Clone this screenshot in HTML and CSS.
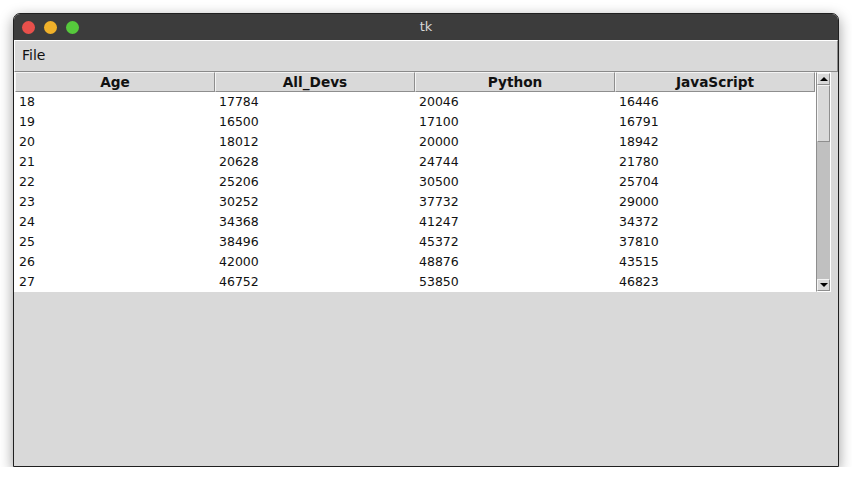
FILE: index.html
```html
<!DOCTYPE html>
<html>
<head>
<meta charset="utf-8">
<link rel="stylesheet" href="styles.css">
</head>
<body>
<div class="window">
  <div class="titlebar">
    <div class="lights">
      <span class="light red"></span>
      <span class="light yellow"></span>
      <span class="light green"></span>
    </div>
    <div class="title">tk</div>
  </div>
  <div class="menubar"><span class="menu-item">File</span></div>
  <div class="content">
    <div class="tree-area">
      <div class="table">
        <div class="row head">
          <div class="hcell">Age</div>
          <div class="hcell">All_Devs</div>
          <div class="hcell">Python</div>
          <div class="hcell">JavaScript</div>
        </div>
        <div class="row"><div class="cell">18</div><div class="cell">17784</div><div class="cell">20046</div><div class="cell">16446</div></div>
        <div class="row"><div class="cell">19</div><div class="cell">16500</div><div class="cell">17100</div><div class="cell">16791</div></div>
        <div class="row"><div class="cell">20</div><div class="cell">18012</div><div class="cell">20000</div><div class="cell">18942</div></div>
        <div class="row"><div class="cell">21</div><div class="cell">20628</div><div class="cell">24744</div><div class="cell">21780</div></div>
        <div class="row"><div class="cell">22</div><div class="cell">25206</div><div class="cell">30500</div><div class="cell">25704</div></div>
        <div class="row"><div class="cell">23</div><div class="cell">30252</div><div class="cell">37732</div><div class="cell">29000</div></div>
        <div class="row"><div class="cell">24</div><div class="cell">34368</div><div class="cell">41247</div><div class="cell">34372</div></div>
        <div class="row"><div class="cell">25</div><div class="cell">38496</div><div class="cell">45372</div><div class="cell">37810</div></div>
        <div class="row"><div class="cell">26</div><div class="cell">42000</div><div class="cell">48876</div><div class="cell">43515</div></div>
        <div class="row"><div class="cell">27</div><div class="cell">46752</div><div class="cell">53850</div><div class="cell">46823</div></div>
      </div>
      <div class="scrollbar">
        <div class="sbtn up"><span class="arrow-up"></span></div>
        <div class="trough">
          <div class="thumb"></div>
        </div>
        <div class="sbtn down"><span class="arrow-down"></span></div>
      </div>
    </div>
  </div>
</div>
</body>
</html>
```
FILE: styles.css
```css
html, body {
  margin: 0;
  padding: 0;
  background: #ffffff;
}
body {
  padding: 13px 0 0 13px;
  font-family: "DejaVu Sans", sans-serif;
}
.window {
  width: 824px;
  height: 452px;
  border: 1px solid #202020;
  border-radius: 7px 7px 0 0;
  background: #d9d9d9;
  box-shadow: 0 4px 14px rgba(0, 0, 0, 0.4);
  display: flex;
  flex-direction: column;
  overflow: hidden;
}
.titlebar {
  height: 26px;
  background: #3c3c3c;
  display: flex;
  align-items: center;
  position: relative;
  flex: none;
}
.lights {
  display: flex;
  gap: 9px;
  padding-left: 8px;
}
.light {
  width: 13px;
  height: 13px;
  border-radius: 50%;
  display: block;
}
.red { background: #e8504b; }
.yellow { background: #f0b12a; }
.green { background: #56c93c; }
.title {
  position: absolute;
  left: 0;
  right: 0;
  text-align: center;
  color: #d8d8d8;
  font-size: 13px;
  top: 5px;
}
.menubar {
  flex: none;
  background: #d9d9d9;
  border-top: 1px solid #ffffff;
  border-left: 1px solid #ffffff;
  border-bottom: 1px solid #8a8a8a;
  border-right: 1px solid #8a8a8a;
  display: flex;
  align-items: center;
  box-sizing: border-box;
  height: 32px;
  padding-bottom: 2px;
}
.menu-item {
  font-size: 14px;
  color: #111;
  padding-left: 7px;
}
.content {
  flex: 1;
  background: #d9d9d9;
}
.tree-area {
  display: flex;
  height: 220px;
}
.table {
  width: 802px;
  background: #ffffff;
  display: flex;
  flex-direction: column;
}
.row {
  display: flex;
  height: 20px;
  align-items: center;
  padding-bottom: 2px;
  box-sizing: border-box;
}
.row.head {
  height: 20px;
  padding: 0 0 0 1px;
  background: #ffffff;
}
.hcell {
  width: 200px;
  height: 20px;
  box-sizing: border-box;
  background: #d9d9d9;
  border-top: 1px solid #f4f4f4;
  border-left: 1px solid #f4f4f4;
  border-bottom: 1px solid #8e8e8e;
  border-right: 1px solid #8e8e8e;
  font-weight: bold;
  font-size: 13.7px;
  text-align: center;
  line-height: 19px;
  color: #111;
}
.cell {
  width: 200px;
  box-sizing: border-box;
  padding-left: 5px;
  font-size: 12.5px;
  color: #111;
}
.scrollbar {
  width: 15px;
  box-sizing: border-box;
  border: 1px solid #ffffff;
  border-left-color: #8e8e8e;
  background: #c0c0c0;
  display: flex;
  flex-direction: column;
}
.sbtn {
  height: 10px;
  flex: none;
  background: #d9d9d9;
  border-top: 1px solid #f4f4f4;
  border-left: 1px solid #f4f4f4;
  border-bottom: 1px solid #8e8e8e;
  border-right: 1px solid #8e8e8e;
  display: flex;
  align-items: center;
  justify-content: center;
}
.arrow-up {
  width: 0;
  height: 0;
  border-left: 4px solid transparent;
  border-right: 4px solid transparent;
  border-bottom: 4px solid #000;
}
.arrow-down {
  width: 0;
  height: 0;
  border-left: 4px solid transparent;
  border-right: 4px solid transparent;
  border-top: 4px solid #000;
}
.trough {
  flex: 1;
  background: #c0c0c0;
}
.thumb {
  height: 57px;
  background: #d9d9d9;
  box-sizing: border-box;
  border-top: 1px solid #f4f4f4;
  border-left: 1px solid #f4f4f4;
  border-bottom: 1px solid #8e8e8e;
  border-right: 1px solid #8e8e8e;
}
```
